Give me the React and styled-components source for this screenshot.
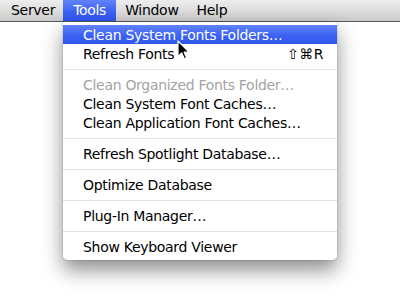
import React from "react";
import styled, { createGlobalStyle } from "styled-components";

const GlobalStyle = createGlobalStyle`
  html, body { margin: 0; padding: 0; background: #ffffff; }
  body { font-family: "DejaVu Sans", "Liberation Sans", sans-serif; }
`;

const Screen = styled.div`
  position: relative;
  width: 400px;
  height: 301px;
  overflow: hidden;
  background: #ffffff;
  font-family: "DejaVu Sans", "Liberation Sans", sans-serif;
  font-size: 14px;
  letter-spacing: -0.3px;
  color: #000;
`;

const MenuBar = styled.div`
  display: flex;
  align-items: stretch;
  height: 21px;
  padding-left: 3px;
  background: linear-gradient(to bottom, #ededed 0%, #dddddd 50%, #cacaca 100%);
  border-bottom: 1px solid #5b5b5b;
`;

const MenuTitle = styled.div`
  display: flex;
  align-items: center;
  padding: 0 ${(p) => p.$pad || 9}px;
  line-height: 21px;
  color: ${(p) => (p.$active ? "#ffffff" : "#000000")};
  background: ${(p) =>
    p.$active ? "linear-gradient(to bottom, #6283f8 0%, #3d62f3 55%, #2f55ee 100%)" : "transparent"};
`;

const Dropdown = styled.div`
  position: absolute;
  left: 63px;
  top: 22px;
  width: 274px;
  padding: 3px 0 4px;
  background: rgba(255, 255, 255, 0.97);
  border-radius: 0 0 5px 5px;
  box-shadow: 0 0 0 1px rgba(0, 0, 0, 0.08), 0 10px 20px rgba(0, 0, 0, 0.45);
`;

const Item = styled.div`
  display: flex;
  align-items: center;
  justify-content: space-between;
  height: 19px;
  padding: 0 13px 0 20px;
  white-space: nowrap;
  color: ${(p) => (p.$selected ? "#ffffff" : p.$disabled ? "#a3a3a3" : "#000000")};
  background: ${(p) =>
    p.$selected ? "linear-gradient(to bottom, #6283f8 0%, #3d62f3 55%, #2f55ee 100%)" : "transparent"};
`;

const Shortcut = styled.span`
  letter-spacing: 0.5px;
`;

const Separator = styled.div`
  height: 1px;
  margin: 6px 0 5px;
  background: #e2e2e2;
`;

const Cursor = styled.svg`
  position: absolute;
  left: 177px;
  top: 40px;
  width: 13px;
  height: 20px;
`;

const items = [
  { label: "Clean System Fonts Folders…", selected: true },
  { label: "Refresh Fonts", shortcut: "⇧⌘R" },
  "sep",
  { label: "Clean Organized Fonts Folder…", disabled: true },
  { label: "Clean System Font Caches…" },
  { label: "Clean Application Font Caches…" },
  "sep",
  { label: "Refresh Spotlight Database…" },
  "sep",
  { label: "Optimize Database" },
  "sep",
  { label: "Plug-In Manager…" },
  "sep",
  { label: "Show Keyboard Viewer" },
];

export default function App() {
  return (
    <Screen>
      <GlobalStyle />
      <MenuBar>
        <MenuTitle $pad={8}>Server</MenuTitle>
        <MenuTitle $active $pad={10}>Tools</MenuTitle>
        <MenuTitle>Window</MenuTitle>
        <MenuTitle>Help</MenuTitle>
      </MenuBar>
      <Dropdown>
        {items.map((it, i) =>
          it === "sep" ? (
            <Separator key={i} />
          ) : (
            <Item key={i} $selected={it.selected} $disabled={it.disabled}>
              <span>{it.label}</span>
              {it.shortcut && <Shortcut>{it.shortcut}</Shortcut>}
            </Item>
          )
        )}
      </Dropdown>
      <Cursor viewBox="0 0 13 20">
        <path
          d="M1 1 L1 16.5 L4.7 13 L7.3 18.8 L9.6 17.8 L7.1 12.2 L12 12.2 Z"
          fill="#000"
          stroke="#fff"
          strokeWidth="1.2"
          strokeLinejoin="round"
        />
      </Cursor>
    </Screen>
  );
}
